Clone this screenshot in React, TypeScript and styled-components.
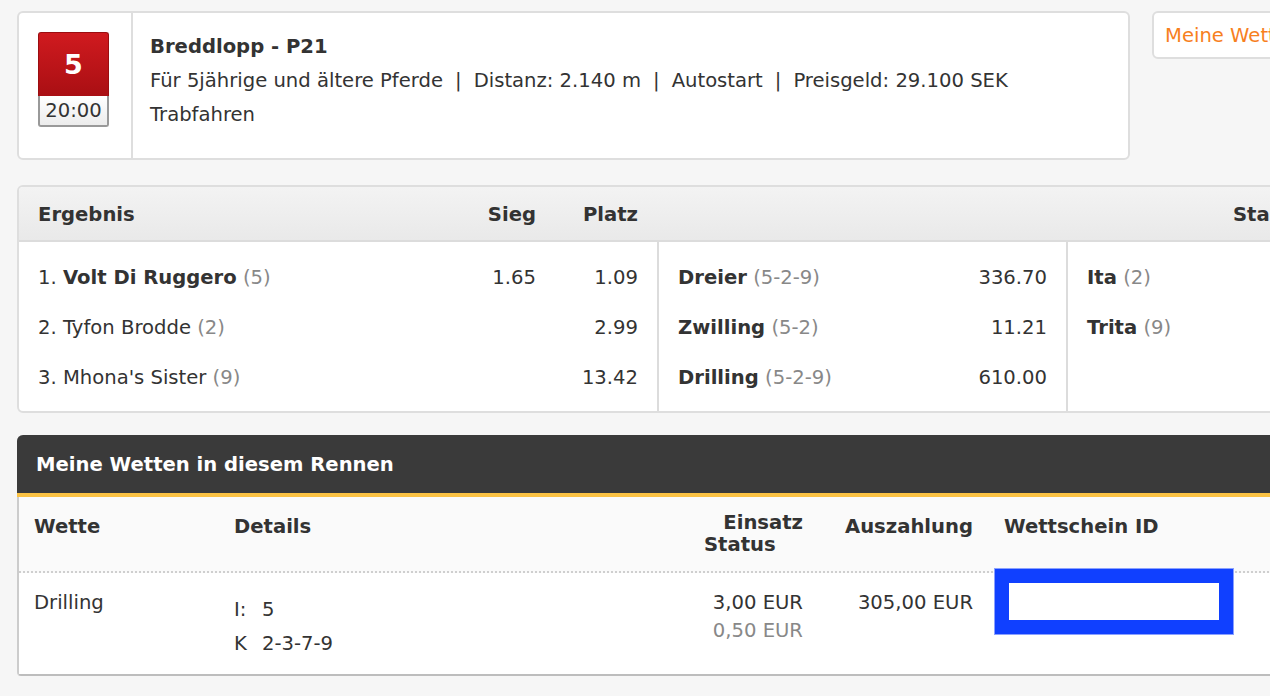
import React from "react";
import styled, { createGlobalStyle } from "styled-components";

const GlobalStyle = createGlobalStyle`
  html, body { margin: 0; padding: 0; }
  body {
    background: #f6f6f6;
    overflow: hidden;
    font-family: "DejaVu Sans", Tahoma, sans-serif;
    font-size: 19.6px;
    color: #333;
  }
  * { box-sizing: border-box; }
`;

const Page = styled.div`
  width: 1800px;
  padding: 11px 0 0 17px;
  display: flex;
  flex-direction: column;
`;

const TopRow = styled.div`
  display: flex;
  align-items: flex-start;
  gap: 22px;
`;

const RaceCard = styled.div`
  width: 1113px;
  height: 149px;
  background: #fff;
  border: 2px solid #dedede;
  border-radius: 6px;
  display: flex;
`;

const BadgeCell = styled.div`
  width: 114px;
  flex: none;
  border-right: 2px solid #dedede;
  padding: 19px 0 0 19px;
`;

const Badge = styled.div`
  width: 71px;
  display: flex;
  flex-direction: column;
`;

const BadgeNum = styled.div`
  height: 64px;
  background: linear-gradient(#d01a1f, #a90f13);
  border: 1px solid #9b0d10;
  border-bottom: none;
  border-radius: 3px 3px 0 0;
  color: #fff;
  font-weight: bold;
  font-size: 27px;
  display: flex;
  align-items: center;
  justify-content: center;
`;

const BadgeTime = styled.div`
  height: 31px;
  background: linear-gradient(#ffffff, #ececec);
  border: 2px solid #999;
  border-top: none;
  border-radius: 0 0 3px 3px;
  font-size: 19.6px;
  display: flex;
  align-items: center;
  justify-content: center;
  color: #333;
`;

const InfoCell = styled.div`
  padding: 17px 0 0 17px;
  line-height: 34px;
`;

const RaceTitle = styled.div`
  font-weight: bold;
`;

const InfoLine = styled.div``;

const Sep = styled.span`
  padding: 0 12px;
`;

const MyBetsButton = styled.div`
  height: 48px;
  width: 300px;
  background: #fff;
  border: 2px solid #dedede;
  border-radius: 6px;
  color: #f7801e;
  padding: 0 0 0 11px;
  display: flex;
  align-items: center;
`;

const ResultsCard = styled.div`
  margin-top: 25px;
  width: 1600px;
  background: #fff;
  border: 2px solid #dedede;
  border-radius: 6px;
  overflow: hidden;
`;

const ResultsHead = styled.div`
  height: 55px;
  padding-top: 1px;
  background: linear-gradient(#f3f3f3, #e9e9e9);
  border-bottom: 2px solid #dcdcdc;
  display: grid;
  grid-template-columns: 640px 409px 1fr;
  align-items: center;
  font-weight: bold;
`;

const HeadGroup = styled.div`
  display: grid;
  grid-template-columns: 1fr 80px 102px;
  padding: 0 21px 0 19px;
  align-items: center;
`;

const HeadRight = styled.div`
  text-align: right;
`;

const StaHead = styled.div`
  grid-column: 3;
  padding-left: 165px;
`;

const ResultsBody = styled.div`
  display: grid;
  grid-template-columns: 640px 409px 1fr;
`;

const ResultsCol = styled.div<{ $divider?: boolean }>`
  padding: 10px 19px 9px 19px;
  border-right: ${(p) => (p.$divider ? "2px solid #dcdcdc" : "none")};
`;

const ResRow = styled.div<{ $cols: string }>`
  height: 50px;
  display: grid;
  grid-template-columns: ${(p) => p.$cols};
  align-items: center;
`;

const Num = styled.div`
  text-align: right;
`;

const Muted = styled.span`
  color: #888;
`;

const Strong = styled.b`
  font-weight: bold;
`;

const BetsPanel = styled.div`
  margin-top: 22px;
  width: 1600px;
  background: #fff;
  border-left: 2px solid #ccc;
  border-bottom: 2px solid #bdbdbd;
  border-radius: 6px 0 0 4px;
`;

const BetsHeader = styled.div`
  height: 62px;
  margin-left: -2px;
  background: #3a3a3a;
  border-bottom: 4px solid #fbc243;
  border-radius: 6px 0 0 0;
  color: #fff;
  font-weight: bold;
  padding: 0 0 0 19px;
  display: flex;
  align-items: center;
`;

const BetsGrid = styled.div<{ $head?: boolean }>`
  display: grid;
  grid-template-columns: 200px 470px 99px 170px 1fr;
  padding-left: 15px;
  padding-top: ${(p) => (p.$head ? "15px" : "16px")};
  background: ${(p) => (p.$head ? "#fafafa" : "#fff")};
  border-bottom: ${(p) => (p.$head ? "2px dotted #cfcfcf" : "none")};
  height: ${(p) => (p.$head ? "76px" : "101px")};
  line-height: ${(p) => (p.$head ? "22px" : "28px")};
`;

const HeadCell = styled.div<{ $right?: boolean }>`
  font-weight: bold;
  padding-top: 4px;
  text-align: ${(p) => (p.$right ? "right" : "left")};
`;

const StackHead = styled.div`
  font-weight: bold;
  display: flex;
  flex-direction: column;
  white-space: nowrap;
`;

const StackRight = styled.span`
  align-self: flex-end;
`;

const IdHead = styled.div`
  font-weight: bold;
  padding: 4px 0 0 31px;
`;

const Cell = styled.div<{ $right?: boolean }>`
  text-align: ${(p) => (p.$right ? "right" : "left")};
  white-space: nowrap;
`;

const DetailsCell = styled.div`
  padding-top: 4px;
  line-height: 34px;
`;

const DetailKey = styled.span`
  display: inline-block;
  width: 28px;
`;

const MutedLine = styled.div`
  color: #888;
`;

const IdCell = styled.div`
  position: relative;
`;

const Redact = styled.div`
  position: absolute;
  left: 21px;
  top: -21px;
  width: 240px;
  height: 67px;
  background: #fff;
  border: 15px solid #1040ff;
  outline: 1px solid #8aa0ff;
  outline-offset: -1px;
`;

export default function App() {
  return (
    <>
      <GlobalStyle />
      <Page>
        <TopRow>
          <RaceCard>
            <BadgeCell>
              <Badge>
                <BadgeNum>5</BadgeNum>
                <BadgeTime>20:00</BadgeTime>
              </Badge>
            </BadgeCell>
            <InfoCell>
              <RaceTitle>Breddlopp - P21</RaceTitle>
              <InfoLine>
                Für 5jährige und ältere Pferde<Sep>|</Sep>Distanz: 2.140 m<Sep>|</Sep>Autostart<Sep>|</Sep>Preisgeld: 29.100 SEK
              </InfoLine>
              <InfoLine>Trabfahren</InfoLine>
            </InfoCell>
          </RaceCard>
          <MyBetsButton>Meine Wetten</MyBetsButton>
        </TopRow>

        <ResultsCard>
          <ResultsHead>
            <HeadGroup>
              <div>Ergebnis</div>
              <HeadRight>Sieg</HeadRight>
              <HeadRight>Platz</HeadRight>
            </HeadGroup>
            <StaHead>Startliste</StaHead>
          </ResultsHead>
          <ResultsBody>
            <ResultsCol $divider>
              <ResRow $cols="1fr 80px 102px">
                <div>
                  1. <Strong>Volt Di Ruggero</Strong> <Muted>(5)</Muted>
                </div>
                <Num>1.65</Num>
                <Num>1.09</Num>
              </ResRow>
              <ResRow $cols="1fr 80px 102px">
                <div>
                  2. Tyfon Brodde <Muted>(2)</Muted>
                </div>
                <Num></Num>
                <Num>2.99</Num>
              </ResRow>
              <ResRow $cols="1fr 80px 102px">
                <div>
                  3. Mhona's Sister <Muted>(9)</Muted>
                </div>
                <Num></Num>
                <Num>13.42</Num>
              </ResRow>
            </ResultsCol>
            <ResultsCol $divider>
              <ResRow $cols="1fr 120px">
                <div>
                  <Strong>Dreier</Strong> <Muted>(5-2-9)</Muted>
                </div>
                <Num>336.70</Num>
              </ResRow>
              <ResRow $cols="1fr 120px">
                <div>
                  <Strong>Zwilling</Strong> <Muted>(5-2)</Muted>
                </div>
                <Num>11.21</Num>
              </ResRow>
              <ResRow $cols="1fr 120px">
                <div>
                  <Strong>Drilling</Strong> <Muted>(5-2-9)</Muted>
                </div>
                <Num>610.00</Num>
              </ResRow>
            </ResultsCol>
            <ResultsCol>
              <ResRow $cols="1fr">
                <div>
                  <Strong>Ita</Strong> <Muted>(2)</Muted>
                </div>
              </ResRow>
              <ResRow $cols="1fr">
                <div>
                  <Strong>Trita</Strong> <Muted>(9)</Muted>
                </div>
              </ResRow>
            </ResultsCol>
          </ResultsBody>
        </ResultsCard>

        <BetsPanel>
          <BetsHeader>Meine Wetten in diesem Rennen</BetsHeader>
          <BetsGrid $head>
            <HeadCell>Wette</HeadCell>
            <HeadCell>Details</HeadCell>
            <StackHead>
              <StackRight>Einsatz</StackRight>
              <span>Status</span>
            </StackHead>
            <HeadCell $right>Auszahlung</HeadCell>
            <IdHead>Wettschein ID</IdHead>
          </BetsGrid>
          <BetsGrid>
            <Cell>Drilling</Cell>
            <DetailsCell>
              <div>
                <DetailKey>I:</DetailKey>5
              </div>
              <div>
                <DetailKey>K</DetailKey>2-3-7-9
              </div>
            </DetailsCell>
            <Cell $right>
              <div>3,00 EUR</div>
              <MutedLine>0,50 EUR</MutedLine>
            </Cell>
            <Cell $right>305,00 EUR</Cell>
            <IdCell>
              <Redact />
            </IdCell>
          </BetsGrid>
        </BetsPanel>
      </Page>
    </>
  );
}
